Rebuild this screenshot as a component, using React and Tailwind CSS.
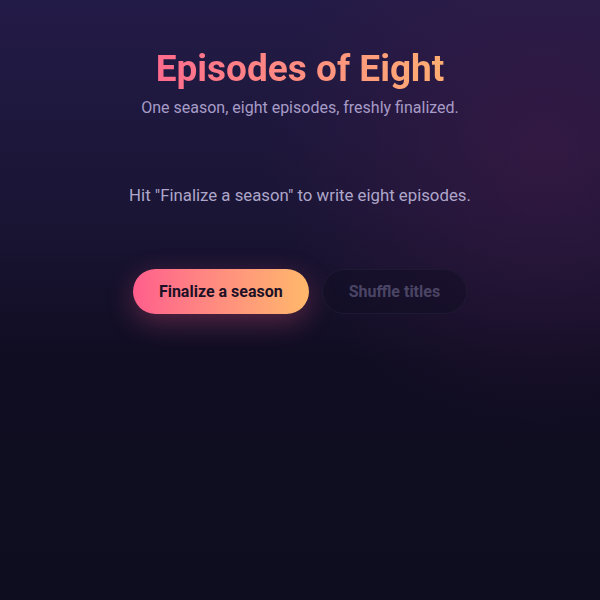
import React from 'react';

const App = () => {
    return (
        <div
            className="relative min-h-[600px] w-full overflow-hidden bg-[linear-gradient(180deg,#231b47_0%,#1a1535_35%,#100d22_60%,#0e0c1f_100%)]"
            style={{ fontFamily: 'Roboto, "Noto Sans", sans-serif' }}
        >
            {/* Purple glow top right */}
            <div className="pointer-events-none absolute -right-56 -top-32 h-[560px] w-[560px] rounded-full bg-[radial-gradient(circle,rgba(64,26,72,0.6)_0%,rgba(64,26,72,0)_70%)]"></div>

            <div className="relative flex flex-col items-center px-6 pt-[46px]">
                <h1 className="bg-gradient-to-r from-[#ff6b8d] to-[#ffad72] bg-clip-text text-[37px] font-bold leading-[46px] text-transparent">
                    Episodes of Eight
                </h1>
                <p className="mt-[4px] text-[16px] text-[#a79cc7]">
                    One season, eight episodes, freshly finalized.
                </p>

                <p className="mt-[63px] text-[16.8px] text-[#aea6ca]">
                    Hit "Finalize a season" to write eight episodes.
                </p>

                <div className="mt-[61px] flex items-center gap-[13px]">
                    <button className="h-[45px] rounded-full bg-gradient-to-r from-[#ff5d8c] to-[#ffb86a] px-[26px] text-[16px] font-bold text-[#1c1126] shadow-[0_8px_28px_rgba(255,94,140,0.3)]">
                        Finalize a season
                    </button>
                    <button className="h-[45px] rounded-full border border-[#1f1a33] bg-[#100d20]/40 px-[26px] text-[16px] font-bold text-[#4a4465]">
                        Shuffle titles
                    </button>
                </div>
            </div>
        </div>
    );
};

export default App;
